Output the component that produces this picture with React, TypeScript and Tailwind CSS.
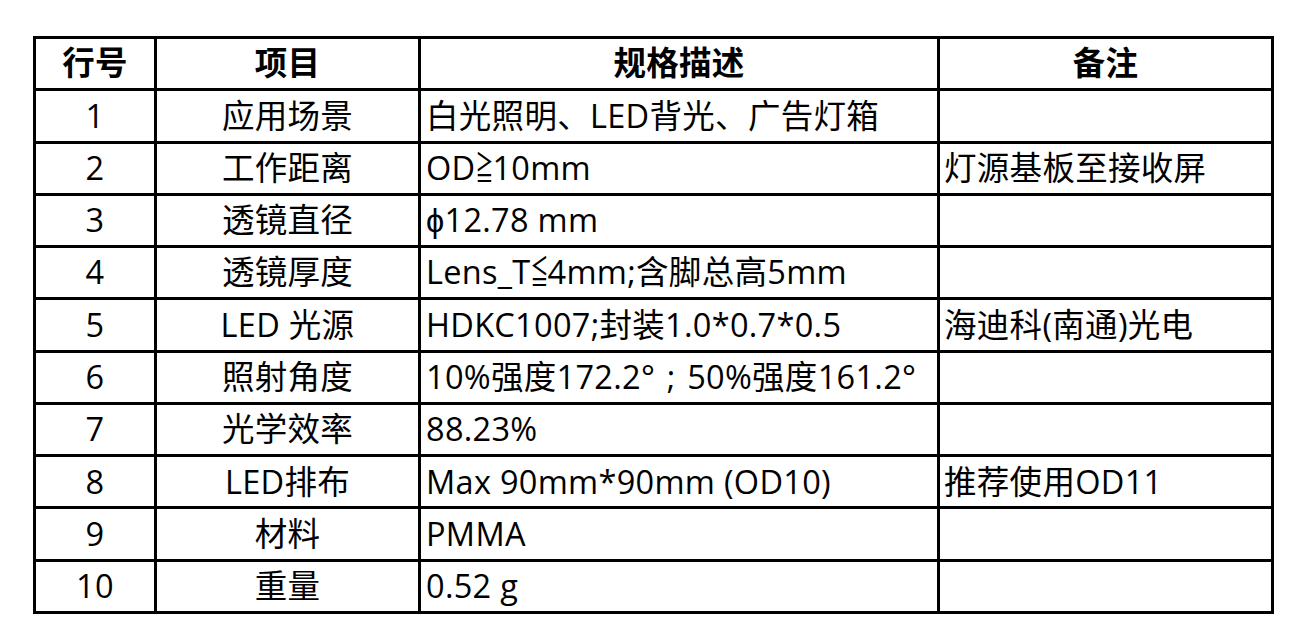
import React from "react";

const Narrow = ({ ch }: { ch: string }) => (
  <span className="inline-flex w-[17px] justify-center">
    <span className="inline-block scale-x-[0.55]">{ch}</span>
  </span>
);

const Semi = () => <span className="inline-block w-[32px] text-center">;</span>;

const rows: [string, string, React.ReactNode, string][] = [
  ["1", "应用场景", "白光照明、LED背光、广告灯箱", ""],
  ["2", "工作距离", <>OD<Narrow ch="≧" />10mm</>, "灯源基板至接收屏"],
  ["3", "透镜直径", "ϕ12.78 mm", ""],
  ["4", "透镜厚度", <>Lens_T<Narrow ch="≦" />4mm;含脚总高5mm</>, ""],
  ["5", "LED 光源", "HDKC1007;封装1.0*0.7*0.5", "海迪科(南通)光电"],
  ["6", "照射角度", <>10%强度172.2°<Semi />50%强度161.2°</>, ""],
  ["7", "光学效率", "88.23%", ""],
  ["8", "LED排布", "Max 90mm*90mm (OD10)", "推荐使用OD11"],
  ["9", "材料", "PMMA", ""],
  ["10", "重量", "0.52 g", ""],
];

export default function App() {
  return (
    <div
      className="w-[1306px] h-[642px] bg-white pt-[36px] pl-[33px] text-black"
      style={{ fontFamily: '"Open Sans", "Noto Sans CJK SC", sans-serif' }}
    >
      <div className="grid w-[1241px] h-[578px] bg-black p-[3px] gap-[3px] grid-cols-[118px_261px_516px_331px] grid-rows-[repeat(11,minmax(0,1fr))] text-[32.5px] tracking-[0.3px] leading-none">
        <div className="bg-white flex items-center justify-center font-bold">行号</div>
        <div className="bg-white flex items-center justify-center font-bold">项目</div>
        <div className="bg-white flex items-center justify-center font-bold">规格描述</div>
        <div className="bg-white flex items-center justify-center font-bold">备注</div>
        {rows.map((r) => (
          <React.Fragment key={r[0]}>
            <div className="bg-white flex items-center justify-center">{r[0]}</div>
            <div className="bg-white flex items-center justify-center">{r[1]}</div>
            <div className="bg-white flex items-center pl-[5px] whitespace-nowrap">{r[2]}</div>
            <div className="bg-white flex items-center pl-[4px] whitespace-nowrap">{r[3]}</div>
          </React.Fragment>
        ))}
      </div>
    </div>
  );
}
